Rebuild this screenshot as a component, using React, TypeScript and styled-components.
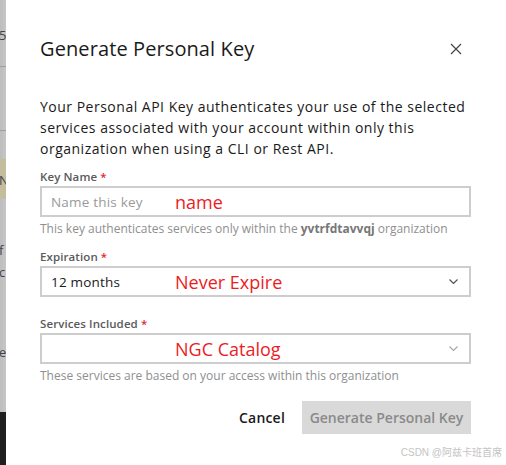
import React from "react";
import styled, { createGlobalStyle } from "styled-components";

const Global = createGlobalStyle`
  html, body { margin: 0; padding: 0; background: #ffffff; }
  body { font-family: "Open Sans", "Liberation Sans", sans-serif; }
  * { box-sizing: border-box; }
`;

const Page = styled.div`
  display: flex;
  width: 506px;
  height: 465px;
  overflow: hidden;
`;

const Backdrop = styled.div`
  position: relative;
  width: 6px;
  flex: none;
  background: linear-gradient(90deg, #bdbdbd, #c6c6c6);
  overflow: hidden;
`;

const BackdropLine = styled.div<{ $top: number }>`
  position: absolute;
  left: 0;
  right: 0;
  top: ${(p) => p.$top}px;
  height: 1px;
  background: #9e9e9e;
`;

const BackdropBand = styled.div<{ $top: number; $h: number; $bg: string }>`
  position: absolute;
  left: 0;
  right: 0;
  top: ${(p) => p.$top}px;
  height: ${(p) => p.$h}px;
  background: ${(p) => p.$bg};
`;

const BackdropChar = styled.span<{ $top: number }>`
  position: absolute;
  left: -1px;
  top: ${(p) => p.$top}px;
  font-size: 13px;
  line-height: 14px;
  color: #444;
`;

const Dialog = styled.div`
  position: relative;
  flex: 1;
  display: flex;
  flex-direction: column;
  padding: 38px 35px 0 34px;
  color: #1a1a1a;
`;

const Header = styled.div`
  display: flex;
  align-items: center;
  justify-content: space-between;
  height: 22px;
`;

const Title = styled.h2`
  margin: 0;
  font-size: 20px;
  font-weight: 500;
  line-height: 22px;
  letter-spacing: 0.1px;
  color: #1a1a1a;
`;

const CloseButton = styled.button`
  border: none;
  background: none;
  padding: 0;
  margin-right: 8px;
  width: 14px;
  height: 14px;
  display: flex;
  align-items: center;
  justify-content: center;
  cursor: pointer;
`;

const Intro = styled.p`
  margin: 36px 0 0;
  font-size: 14px;
  line-height: 21px;
  letter-spacing: 0.5px;
  color: #1a1a1a;
`;

const Field = styled.div<{ $mt: number }>`
  display: flex;
  flex-direction: column;
  margin-top: ${(p) => p.$mt}px;
`;

const Label = styled.label`
  font-size: 11.5px;
  line-height: 14px;
  font-weight: 600;
  letter-spacing: 0.1px;
  color: #5a5a5a;
  margin-bottom: 2px;
`;

const Req = styled.span`
  color: #e3262c;
  margin-left: 3px;
`;

const Box = styled.div`
  position: relative;
  height: 31px;
  border: 2px solid #cdcdcd;
  display: flex;
  align-items: center;
  justify-content: space-between;
  padding: 0 11px 0 9px;
  font-size: 13.5px;
  letter-spacing: 0.2px;
`;

const Placeholder = styled.span`
  color: #9a9a9a;
`;

const Value = styled.span`
  color: #1a1a1a;
`;

const Annotation = styled.span`
  position: absolute;
  left: 133px;
  top: 50%;
  transform: translateY(-52%);
  font-size: 18px;
  letter-spacing: 0;
  color: #ec1c24;
  pointer-events: none;
`;

const Helper = styled.div`
  margin-top: 5px;
  font-size: 12px;
  line-height: 14px;
  color: #8f8f8f;
  b { font-weight: 700; color: #777; }
`;

const Actions = styled.div`
  display: flex;
  justify-content: flex-end;
  align-items: center;
  gap: 17px;
  margin-top: 18px;
`;

const TextButton = styled.button`
  border: none;
  background: none;
  font-family: inherit;
  font-size: 14px;
  font-weight: 600;
  letter-spacing: 0.2px;
  color: #1a1a1a;
  padding: 0;
`;

const PrimaryButton = styled.button`
  border: none;
  background: #d9d9d9;
  font-family: inherit;
  font-size: 14px;
  font-weight: 600;
  color: #8a8a8a;
  height: 33px;
  width: 169px;
  padding: 0;
`;

const Watermark = styled.div`
  position: absolute;
  right: 4px;
  bottom: 6px;
  font-size: 10px;
  color: #c4c4c4;
  font-family: "Liberation Sans", "Noto Sans CJK SC", sans-serif;
`;

const Chevron = ({ color }: { color: string }) => (
  <svg width="9" height="5" viewBox="0 0 9 5" fill="none">
    <path d="M0.5 0.5 L4.5 4.5 L8.5 0.5" stroke={color} strokeWidth="1.2" />
  </svg>
);

export default function App() {
  return (
    <>
      <Global />
      <Page>
        <Backdrop>
          <BackdropChar $top={28}>5</BackdropChar>
          <BackdropLine $top={66} />
          <BackdropLine $top={130} />
          <BackdropBand $top={159} $h={40} $bg="#c3bd9e" />
          <BackdropChar $top={173}>N</BackdropChar>
          <BackdropChar $top={243}>f</BackdropChar>
          <BackdropChar $top={265}>c</BackdropChar>
          <BackdropChar $top={345}>e</BackdropChar>
          <BackdropBand $top={412} $h={53} $bg="#1f1f1f" />
        </Backdrop>
        <Dialog>
          <Header>
            <Title>Generate Personal Key</Title>
            <CloseButton aria-label="Close">
              <svg width="12" height="12" viewBox="0 0 12 12">
                <path d="M1 1 L11 11 M11 1 L1 11" stroke="#444" strokeWidth="1.2" />
              </svg>
            </CloseButton>
          </Header>
          <Intro>
            Your Personal API Key authenticates your use of the selected services associated with
            your account within only this organization when using a CLI or Rest API.
          </Intro>
          <Field $mt={11}>
            <Label>
              Key Name<Req>*</Req>
            </Label>
            <Box>
              <Placeholder>Name this key</Placeholder>
              <Annotation>name</Annotation>
            </Box>
            <Helper>
              This key authenticates services only within the <b>yvtrfdtavvqj</b> organization
            </Helper>
          </Field>
          <Field $mt={14}>
            <Label>
              Expiration<Req>*</Req>
            </Label>
            <Box>
              <Value>12 months</Value>
              <Annotation>Never Expire</Annotation>
              <Chevron color="#555" />
            </Box>
          </Field>
          <Field $mt={20}>
            <Label>
              Services Included<Req>*</Req>
            </Label>
            <Box>
              <span />
              <Annotation>NGC Catalog</Annotation>
              <Chevron color="#aaa" />
            </Box>
            <Helper>These services are based on your access within this organization</Helper>
          </Field>
          <Actions>
            <TextButton>Cancel</TextButton>
            <PrimaryButton>Generate Personal Key</PrimaryButton>
          </Actions>
          <Watermark>CSDN @阿兹卡班首席</Watermark>
        </Dialog>
      </Page>
    </>
  );
}
